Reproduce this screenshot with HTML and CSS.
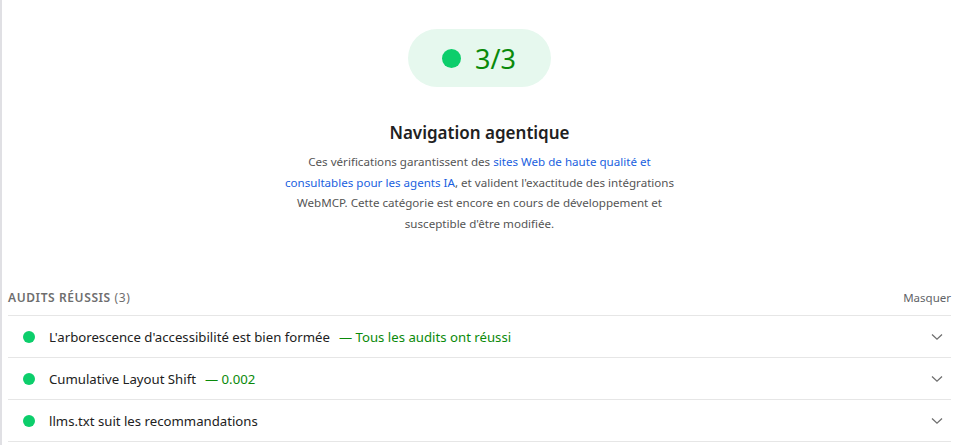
FILE: index.html
```html
<!DOCTYPE html>
<html lang="fr">
<head>
<meta charset="utf-8">
<link rel="stylesheet" href="styles.css">
</head>
<body>
<div class="page">
  <header class="cat-header">
    <div class="gauge">
      <span class="gauge-dot"></span>
      <span class="gauge-value">3/3</span>
    </div>
    <h2 class="cat-title">Navigation agentique</h2>
    <p class="cat-desc">Ces vérifications garantissent des <a href="#">sites Web de haute qualité et consultables pour les agents IA</a>, et valident l'exactitude des intégrations WebMCP. Cette catégorie est encore en cours de développement et susceptible d'être modifiée.</p>
  </header>
  <section class="group">
    <div class="group-head">
      <span class="group-title">Audits réussis <span class="count">(3)</span></span>
      <span class="toggle">Masquer</span>
    </div>
    <div class="audit">
      <span class="dot"></span>
      <span class="audit-title">L'arborescence d'accessibilité est bien formée</span>
      <span class="audit-value">— Tous les audits ont réussi</span>
      <svg class="chev" viewBox="0 0 12 8" width="12" height="8"><path d="M1 1.5 6 6.2 11 1.5" fill="none" stroke="#6f6f6f" stroke-width="1.3"/></svg>
    </div>
    <div class="audit">
      <span class="dot"></span>
      <span class="audit-title">Cumulative Layout Shift</span>
      <span class="audit-value">— 0.002</span>
      <svg class="chev" viewBox="0 0 12 8" width="12" height="8"><path d="M1 1.5 6 6.2 11 1.5" fill="none" stroke="#6f6f6f" stroke-width="1.3"/></svg>
    </div>
    <div class="audit">
      <span class="dot"></span>
      <span class="audit-title">llms.txt suit les recommandations</span>
      <svg class="chev" viewBox="0 0 12 8" width="12" height="8"><path d="M1 1.5 6 6.2 11 1.5" fill="none" stroke="#6f6f6f" stroke-width="1.3"/></svg>
    </div>
  </section>
</div>
</body>
</html>
```
FILE: styles.css
```css
html, body {
  margin: 0;
  padding: 0;
  background: #fff;
}
body {
  font-family: "Noto Sans", "Open Sans", sans-serif;
  color: #212121;
  border-left: 2px solid #e0e0e4;
  min-height: 445px;
  box-sizing: border-box;
}
.page {
  padding: 0 4px 0 6px;
}
.cat-header {
  display: flex;
  flex-direction: column;
  align-items: center;
  padding-top: 29px;
}
.gauge {
  display: flex;
  align-items: center;
  gap: 14px;
  width: 143px;
  height: 58px;
  box-sizing: border-box;
  padding-left: 34px;
  border-radius: 29px;
  background: #e6f8ee;
}
.gauge-dot {
  width: 19px;
  height: 19px;
  border-radius: 50%;
  background: #0cce6b;
}
.gauge-value {
  font-size: 27px;
  color: #0a8a0a;
  line-height: 1;
}
.cat-title {
  margin: 35px 0 0;
  font-size: 17px;
  font-weight: 600;
  line-height: 22px;
  color: #212121;
}
.cat-desc {
  margin: 8px 0 0;
  width: 396px;
  text-align: center;
  font-size: 11.6px;
  line-height: 20.6px;
  color: #555;
}
.cat-desc a {
  color: #1a5fe0;
  text-decoration: none;
}
.group {
  margin-top: 54px;
}
.group-head {
  display: flex;
  justify-content: space-between;
  align-items: center;
  padding: 0 0 8px 0;
  border-bottom: 1px solid #e6e6e6;
  height: 28px;
  box-sizing: border-box;
}
.group-title {
  font-size: 12px;
  font-weight: 600;
  text-transform: uppercase;
  letter-spacing: 0.6px;
  color: #6e6e6e;
}
.count {
  font-weight: 400;
}
.toggle {
  font-size: 11.5px;
  color: #5f6368;
}
.audit {
  display: flex;
  align-items: center;
  height: 41px;
  border-bottom: 1px solid #e6e6e6;
  font-size: 13.2px;
  padding-left: 15px;
  padding-right: 8px;
}
.dot {
  width: 12px;
  height: 12px;
  border-radius: 50%;
  background: #0cce6b;
  margin-right: 14px;
}
.audit-title {
  color: #212121;
}
.audit-value {
  color: #0a8a0a;
  margin-left: 9px;
}
.chev {
  margin-left: auto;
}
```
